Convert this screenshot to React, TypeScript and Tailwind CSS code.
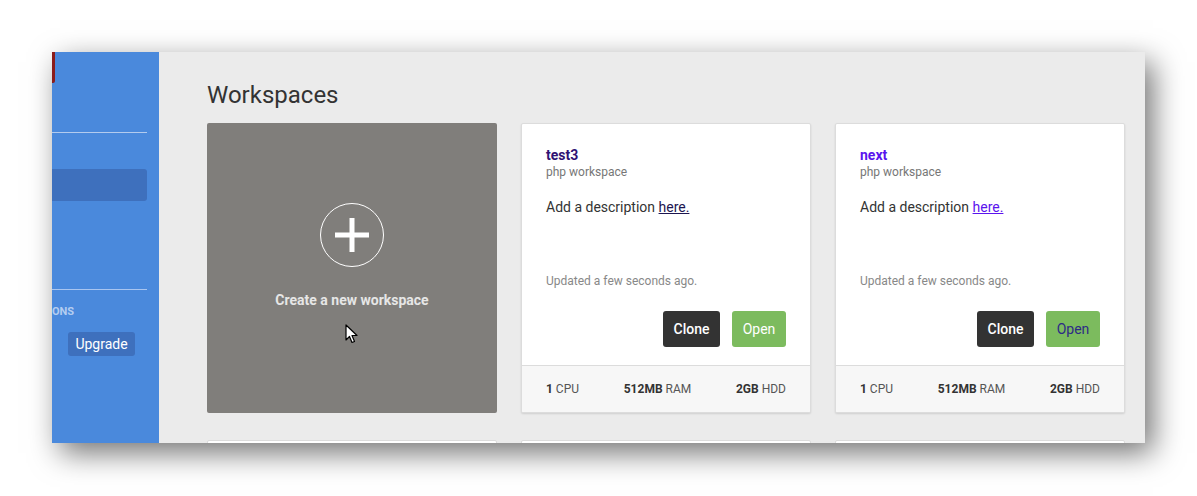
import React from 'react';

type Ws = {
  name: string;
  nameColor: string;
  linkColor: string;
  openColor: string;
};

const workspaces: Ws[] = [
  { name: 'test3', nameColor: 'text-[#2f1273]', linkColor: 'text-[#1c1650]', openColor: 'text-white' },
  { name: 'next', nameColor: 'text-[#5b14ee]', linkColor: 'text-[#5b14ee]', openColor: 'text-[#2d2a86]' },
];

const Cursor = () => (
  <svg width="14" height="20" viewBox="0 0 14 20" className="mt-[16px]">
    <path d="M1 1 L1 16 L4.5 12.5 L7 18.5 L9.5 17.5 L7 11.5 L12 11.5 Z" fill="white" stroke="black" strokeWidth="1.2" strokeLinejoin="round" />
  </svg>
);

const WorkspaceCard = ({ ws }: { ws: Ws }) => (
  <div className="flex flex-col h-[290px] bg-white border border-[#dcdcdc] rounded-[2px] shadow-[0_1px_2px_rgba(0,0,0,0.12)]">
    <div className="flex-1 flex flex-col pt-[21px] pl-[24px] pr-[24px] pb-[18px]">
      <a className={`text-[14px] leading-[20px] font-bold ${ws.nameColor}`}>{ws.name}</a>
      <div className="text-[12px] leading-[14px] text-[#777]">php workspace</div>
      <p className="mt-[18px] text-[14px] leading-[20px] text-[#333]">
        Add a description <a className={`underline ${ws.linkColor}`}>here.</a>
      </p>
      <div className="mt-auto text-[12px] leading-[14px] text-[#888]">Updated a few seconds ago.</div>
      <div className="flex justify-end gap-[12px] mt-[23px]">
        <button className="h-[36px] w-[57px] rounded-[3px] bg-[#333333] text-white text-[14px] font-medium">Clone</button>
        <button className={`h-[36px] w-[54px] rounded-[3px] bg-[#7cbb5e] text-[14px] ${ws.openColor}`}>Open</button>
      </div>
    </div>
    <div className="h-[47px] flex items-center justify-between pl-[24px] pr-[24px] border-t border-[#dcdcdc] bg-[#f7f7f7] rounded-b-[2px] text-[12px] text-[#555]">
      <span><b className="text-[#333]">1</b> CPU</span>
      <span><b className="text-[#333]">512MB</b> RAM</span>
      <span><b className="text-[#333]">2GB</b> HDD</span>
    </div>
  </div>
);

export default function App() {
  return (
    <div className="w-[1197px] h-[496px] bg-white pl-[52px] pt-[52px] font-['Roboto',sans-serif]">
      <div className="flex w-[1093px] h-[391px] overflow-hidden shadow-[8px_10px_28px_rgba(0,0,0,0.55)]">
        {/* sidebar (cropped) */}
        <div className="w-[107px] shrink-0 bg-[#4a89dc] flex flex-col">
          <div className="w-[3px] h-[31px] bg-[#8a1c1c] rounded-br-[2px]" />
          <div className="mt-[49px] w-[95px] h-px bg-[#b3cbee]" />
          <div className="mt-[36px] w-[95px] h-[32px] bg-[#3e70bd] rounded-r-[3px]" />
          <div className="mt-[88px] w-[95px] h-px bg-[#a9c5f0]" />
          <div className="mt-[15px] text-[11px] leading-[13px] font-bold text-[#b4cdf0]">ONS</div>
          <button className="mt-[14px] ml-[16px] w-[67px] h-[24px] rounded-[3px] bg-[#3e70bd] text-white text-[14px]">Upgrade</button>
        </div>

        {/* main */}
        <div className="flex-1 bg-[#ebebeb] pl-[48px] pt-[29px]">
          <h1 className="text-[24px] leading-[28px] text-[#333] font-normal">Workspaces</h1>
          <div className="mt-[14px] grid grid-cols-[290px_290px_290px] gap-x-[24px] gap-y-[27px]">
            <div className="h-[290px] bg-[#807e7b] rounded-[2px] flex flex-col items-center pt-[80px]">
              <svg width="64" height="64" viewBox="0 0 64 64">
                <circle cx="32" cy="32" r="31.5" fill="none" stroke="white" strokeWidth="1" />
                <rect x="15" y="29.5" width="34" height="5" fill="white" />
                <rect x="29.5" y="15" width="5" height="34" fill="white" />
              </svg>
              <div className="mt-[25px] text-[14px] leading-[16px] font-bold text-[#e6e6e6]">Create a new workspace</div>
              <Cursor />
            </div>
            {workspaces.map((ws) => (
              <WorkspaceCard key={ws.name} ws={ws} />
            ))}
            <div className="h-[290px] bg-white border border-[#dcdcdc] rounded-[2px]" />
            <div className="h-[290px] bg-white border border-[#dcdcdc] rounded-[2px]" />
            <div className="h-[290px] bg-white border border-[#dcdcdc] rounded-[2px]" />
          </div>
        </div>
      </div>
    </div>
  );
}
